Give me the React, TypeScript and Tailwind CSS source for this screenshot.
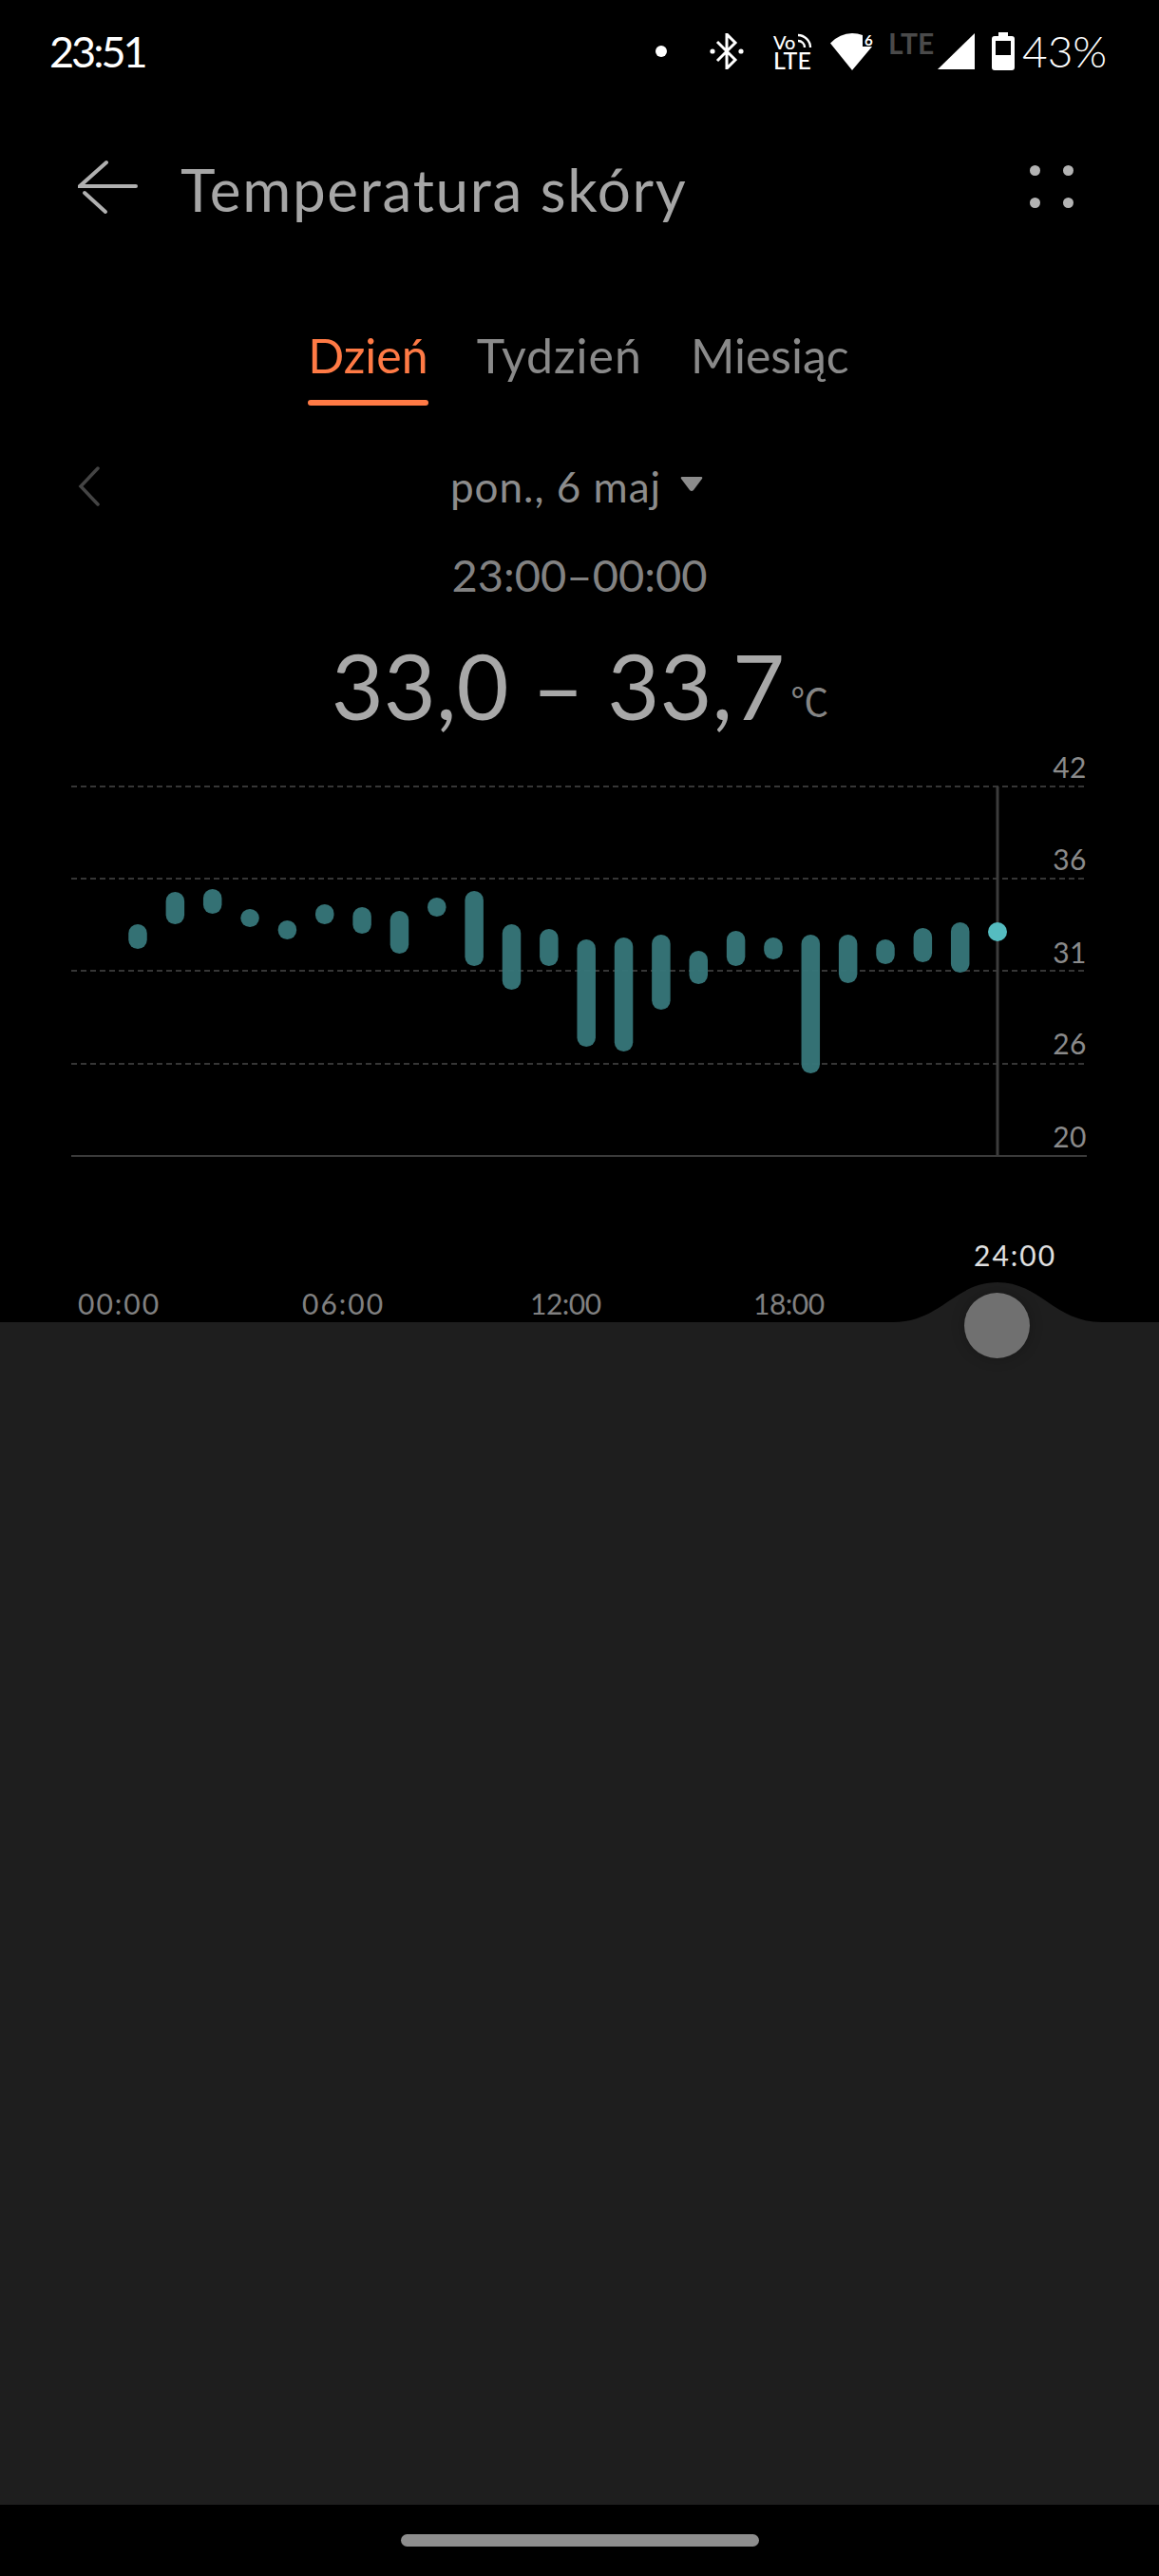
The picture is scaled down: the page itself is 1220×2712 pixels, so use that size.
const bars = [
  [973, 999], [939, 973], [936, 962], [957, 976], [969, 989], [952, 973],
  [955, 983], [959, 1004], [945, 965], [938, 1017], [973, 1042], [978, 1017],
  [989, 1102], [987, 1107], [984, 1063], [1001, 1036], [980, 1017], [987, 1010],
  [984, 1130], [984, 1035], [989, 1015], [977, 1013], [971, 1024],
];

const gridLines = [828, 925, 1022, 1120];

const yLabels = [
  { label: '42', className: 'top-[10px]' },
  { label: '36', className: 'top-[107px]' },
  { label: '31', className: 'top-[205px]' },
  { label: '26', className: 'top-[301px]' },
  { label: '20', className: 'top-[399px]' },
];

const xLabels = [
  { label: '00:00', className: 'left-[82px] tracking-[2px]' },
  { label: '06:00', className: 'left-[318px] tracking-[2px]' },
  { label: '12:00', className: 'left-[558px] tracking-[-0.5px]' },
  { label: '18:00', className: 'left-[793px] tracking-[-0.5px]' },
];

function StatusBar() {
  return (
    <div className="flex h-[108px] items-center pl-[52px] pr-[54px] text-white">
      <span className="text-[45px] leading-none tracking-[-3px]">23:51</span>
      <div className="ml-auto flex items-center">
        <div className="h-[12px] w-[12px] rounded-full bg-white" />
        <svg width="36" height="38" viewBox="0 0 36 38" className="ml-[45px]" fill="none" stroke="white" strokeWidth="3">
          <path d="M8 9 L27 28 L18 37 V1 L27 10 L8 29" />
          <circle cx="3" cy="19" r="2.6" fill="white" stroke="none" />
          <circle cx="33" cy="19" r="2.6" fill="white" stroke="none" />
        </svg>
        <div className="ml-[31px] flex h-[38px] w-[43px] flex-col font-medium leading-none">
          <div className="flex h-[18px] items-start">
            <span className="block text-[20px] leading-[18px]">Vo</span>
            <svg width="16" height="16" viewBox="0 0 16 16" className="ml-[1px]" fill="none" stroke="white" strokeWidth="2.4">
              <path d="M1 2 C8 2 14 8 14 15" />
              <path d="M1 8 C5 8 8 11 8 15" />
            </svg>
          </div>
          <span className="block text-[25px] leading-[20px]">LTE</span>
        </div>
        <div className="relative ml-[17px] h-[39px] w-[45px]">
          <svg width="44" height="39" viewBox="0 0 44 39" fill="white">
            <path d="M23 39 L0 10.5 Q10 0 23 0 Q29 0 34 2 V14 H44 Z" />
          </svg>
          <span className="absolute left-[36px] top-[0px] text-[15px] font-bold leading-[15px]">6</span>
        </div>
        <span className="mb-[17px] ml-[16px] block w-[45px] text-[30px] font-bold leading-[21px] text-[#4a4a4a]">LTE</span>
        <svg width="39" height="38" viewBox="0 0 39 38" className="ml-[7px]" fill="white">
          <path d="M39 0 V38 H0 Z" />
        </svg>
        <svg width="24" height="40" viewBox="0 0 24 40" className="ml-[18px]" fill="white">
          <path
            fillRule="evenodd"
            d="M7 0 H17 V4 H21 Q24 4 24 7 V37 Q24 40 21 40 H3 Q0 40 0 37 V7 Q0 4 3 4 H7 Z M4 9 V24 H20 V9 Z"
          />
        </svg>
        <span className="ml-[8px] block w-[90px] text-[46px] font-light leading-none">43%</span>
      </div>
    </div>
  );
}

function Header() {
  return (
    <div className="flex h-[176px] items-center pl-[82px] pr-[90px]">
      <svg width="64" height="58" viewBox="0 0 64 58" className="mt-[2px]" fill="none" stroke="#b0b0b0" strokeWidth="4" strokeLinecap="round">
        <path d="M30 3 L2 28 H61" />
        <path d="M7 35 L29 55" />
      </svg>
      <h1 className="ml-[44px] mt-[6px] text-[62px] font-normal leading-none tracking-[1.7px] text-[#a6a6a6]">
        Temperatura skóry
      </h1>
      <div className="ml-auto grid grid-cols-2 gap-x-[24px] gap-y-[23px]">
        <div className="h-[11px] w-[11px] rounded-full bg-[#b3b3b3]" />
        <div className="h-[11px] w-[11px] rounded-full bg-[#b3b3b3]" />
        <div className="h-[11px] w-[11px] rounded-full bg-[#b3b3b3]" />
        <div className="h-[11px] w-[11px] rounded-full bg-[#b3b3b3]" />
      </div>
    </div>
  );
}

function Tabs() {
  return (
    <div className="flex h-[143px] items-end justify-center gap-[51px] pr-[2px] text-[50px] leading-none text-[#8a8a8a]">
      <div className="flex flex-col">
        <span className="text-[#ff7a45]">Dzień</span>
        <div className="mt-[22px] h-[6px] rounded-full bg-[#ff7a45]" />
      </div>
      <span className="pb-[28px] tracking-[1px]">Tydzień</span>
      <span className="pb-[28px]">Miesiąc</span>
    </div>
  );
}

function DateRow() {
  return (
    <div className="mt-[57px] grid h-[56px] grid-cols-[1fr_auto_1fr] items-center">
      <svg width="23" height="42" viewBox="0 0 23 42" className="ml-[82px]" fill="none" stroke="#444444" strokeWidth="3.5" strokeLinecap="round">
        <path d="M21 2 L3 21 L21 40" />
      </svg>
      <div className="mr-[6px] flex items-center text-[#8c8c8c]">
        <span className="text-[44px] leading-none tracking-[1px]">pon., 6 maj</span>
        <svg width="24" height="16" viewBox="0 0 24 16" className="mb-[4px] ml-[20px]" fill="#8c8c8c">
          <path d="M2 0 H22 Q24 0 23 2 L14 14 Q12 16 10 14 L1 2 Q0 0 2 0 Z" />
        </svg>
      </div>
      <div />
    </div>
  );
}

function Chart() {
  return (
    <div className="relative h-[610px]">
      <svg width="1220" height="610" viewBox="0 782 1220 610" className="block">
        {gridLines.map((y) => (
          <line key={y} x1="75" x2="1144" y1={y} y2={y} stroke="#363636" strokeWidth="2" strokeDasharray="6 4" />
        ))}
        <line x1="75" x2="1144" y1="1217" y2="1217" stroke="#3a3a3a" strokeWidth="2" />
        <line x1="1050" x2="1050" y1="828" y2="1217" stroke="#3c3c3c" strokeWidth="3" />
        {bars.map(([top, bottom], i) => (
          <rect
            key={i}
            x={145 + i * 39.35 - 9.75}
            y={top}
            width="19.5"
            height={bottom - top}
            rx="9.75"
            fill="#367679"
            fillOpacity="0.96"
          />
        ))}
        <circle cx="1050" cy="981" r="10" fill="#55bcc0" />
        <path d="M940 1392 C990 1392 1005 1350 1050 1350 C1095 1350 1110 1392 1160 1392 Z" fill="#1e1e1e" />
      </svg>
      {yLabels.map((item) => (
        <span key={item.label} className={`absolute right-[76px] text-[30px] leading-[30px] tracking-[0.5px] text-[#8a8a8a] ${item.className}`}>
          {item.label}
        </span>
      ))}
      {xLabels.map((item) => (
        <span key={item.label} className={`absolute top-[575px] text-[30px] leading-[30px] text-[#808080] ${item.className}`}>
          {item.label}
        </span>
      ))}
      <span className="absolute left-[1025px] top-[524px] text-[30px] leading-[30px] tracking-[2px] text-[#e0e0e0]">24:00</span>
      <div className="absolute left-[1015px] top-[579px] h-[69px] w-[69px] rounded-full bg-[#707070] shadow-[0_0_14px_rgba(0,0,0,0.25)]" />
    </div>
  );
}

export default function App() {
  return (
    <div className="flex h-[2712px] w-[1220px] flex-col overflow-hidden bg-black font-['Lato',sans-serif]">
      <StatusBar />
      <Header />
      <Tabs />
      <DateRow />
      <div className="mt-[41px] flex h-[48px] items-center justify-center text-[47px] leading-none text-[#828282]">
        23:00–00:00
      </div>
      <div className="mt-[31px] flex h-[122px] items-center justify-center pl-[1px] text-[#a8a8a8]">
        <span className="text-[95px] leading-none">33,0 – 33,7</span>
        <span className="ml-[6px] mt-[32px] font-['Noto_Sans_CJK_SC',sans-serif] text-[40px] leading-none text-[#858585]">℃</span>
      </div>
      <Chart />
      <div className="flex-1 bg-[#1e1e1e]" />
      <div className="flex h-[75px] justify-center bg-black pt-[31px]">
        <div className="h-[13px] w-[377px] rounded-full bg-[#8e8e8e]" />
      </div>
    </div>
  );
}
